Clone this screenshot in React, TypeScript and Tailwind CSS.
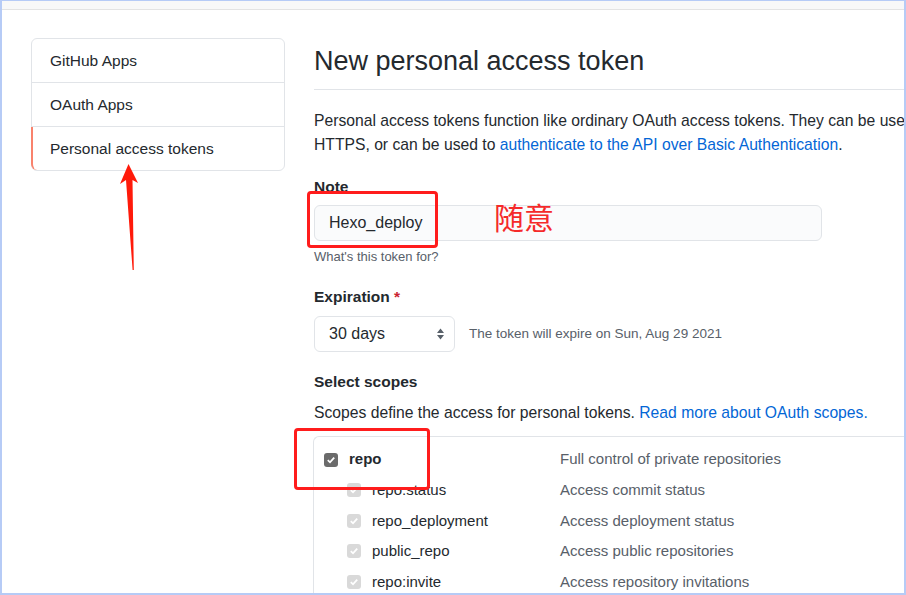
import React from "react";

const font = { fontFamily: '"Liberation Sans", Arial, "Noto Sans CJK SC", sans-serif' };

const subScopes = [
  { name: "repo:status", desc: "Access commit status" },
  { name: "repo_deployment", desc: "Access deployment status" },
  { name: "public_repo", desc: "Access public repositories" },
  { name: "repo:invite", desc: "Access repository invitations" },
];

const CheckBox = ({ disabled }: { disabled?: boolean }) => (
  <span
    className={`flex h-[14px] w-[14px] shrink-0 items-center justify-center rounded-[3px] ${
      disabled ? "bg-[#d9d9d9]" : "bg-[#6b6b6b]"
    }`}
  >
    <svg width="10" height="10" viewBox="0 0 10 10">
      <path d="M1.8 5.2 L4 7.3 L8.2 2.6" fill="none" stroke="white" strokeWidth="1.8" />
    </svg>
  </span>
);

const App = () => {
  return (
    <div
      className="relative h-[595px] w-[906px] overflow-hidden border-t border-b-2 border-l-2 border-r-2 border-[#b6cbf6] bg-white text-[#24292e]"
      style={font}
    >
      {/* top bar */}
      <div className="h-[8px] bg-[#f8f8f8]" />
      <div className="h-px bg-[#e3e3e3]" />

      <div className="flex items-start pt-[28px]">
        {/* Sidebar */}
        <nav className="ml-[29px] w-[254px] shrink-0 rounded-[6px] border border-[#e1e4e8] text-[15.5px]">
          <div className="flex h-[44px] items-center border-b border-[#e1e4e8] pl-[18px]">GitHub Apps</div>
          <div className="flex h-[44px] items-center border-b border-[#e1e4e8] pl-[18px]">OAuth Apps</div>
          <div className="-ml-px flex h-[43px] items-center rounded-bl-[6px] border-l-2 border-[#f9826c] pl-[17px]">
            Personal access tokens
          </div>
        </nav>

        {/* Main */}
        <main className="ml-[29px] w-[800px] shrink-0 pt-[5px]">
          <h1 className="border-b border-[#e1e4e8] pb-[10px] text-[27px] leading-[36px] font-normal">
            New personal access token
          </h1>

          <p className="mt-[19px] whitespace-nowrap text-[15.7px] leading-[24px]">
            Personal access tokens function like ordinary OAuth access tokens. They can be use
            <br />
            HTTPS, or can be used to{" "}
            <span className="text-[#0366d6]">authenticate to the API over Basic Authentication</span>.
          </p>

          <div className="mt-[18px] text-[15.5px] leading-[24px] font-bold">Note</div>
          <div className="mt-[6px] flex h-[36px] w-[508px] items-center rounded-[6px] border border-[#e1e4e8] bg-[#fafbfc] pl-[14px] text-[16px]">
            Hexo_deploy
          </div>
          <div className="mt-[6px] text-[13px] leading-[20px] text-[#586069]">What's this token for?</div>

          <div className="mt-[18px] text-[15.5px] leading-[24px] font-bold">
            Expiration <span className="text-[#cb2431]">*</span>
          </div>
          <div className="mt-[7px] flex items-center">
            <div className="flex h-[36px] w-[141px] items-center justify-between rounded-[6px] border border-[#e1e4e8] bg-white pl-[14px] pr-[9px] text-[16px]">
              <span>30 days</span>
              <svg width="9" height="14" viewBox="0 0 9 14">
                <path d="M4.5 1.5 L8 6 L1 6 Z M4.5 12.5 L8 8 L1 8 Z" fill="#586069" />
              </svg>
            </div>
            <span className="ml-[14px] text-[13.5px] text-[#586069]">The token will expire on Sun, Aug 29 2021</span>
          </div>

          <div className="mt-[18px] text-[15.5px] leading-[24px] font-bold">Select scopes</div>
          <p className="mt-[7px] text-[15.7px] leading-[24px]">
            Scopes define the access for personal tokens.{" "}
            <span className="text-[#0366d6]">Read more about OAuth scopes.</span>
          </p>

          <div className="-ml-px mt-[11px] rounded-tl-[6px] border-l border-t border-[#e1e4e8] pt-[7px] text-[15px]">
            <div className="flex h-[31px] items-center pl-[10px]">
              <div className="flex w-[236px] items-center gap-[11px]">
                <CheckBox />
                <span className="font-bold">repo</span>
              </div>
              <span className="text-[#586069]">Full control of private repositories</span>
            </div>
            {subScopes.map((s) => (
              <div key={s.name} className="flex h-[30.5px] items-center pl-[33px]">
                <div className="flex w-[213px] items-center gap-[11px]">
                  <CheckBox disabled />
                  <span>{s.name}</span>
                </div>
                <span className="text-[#586069]">{s.desc}</span>
              </div>
            ))}
          </div>
        </main>
      </div>

      {/* annotations */}
      <div className="absolute left-[305px] top-[190px] h-[57px] w-[131px] rounded-[4px] border-[3px] border-[#ff1c1c]" />
      <div
        className="absolute left-[492px] top-[195px] text-[30px] leading-[40px] text-[#f52a2a]"
        style={{ fontFamily: '"Noto Sans CJK SC", sans-serif' }}
      >
        随意
      </div>
      <div className="absolute left-[292px] top-[427px] h-[62px] w-[136px] rounded-[4px] border-[3px] border-[#ff1c1c]" />
      <svg className="absolute left-0 top-0" width="906" height="595" viewBox="0 0 906 595" pointerEvents="none">
        <polygon
          points="128.5,164 138,183 132.5,180 133.8,270 132.6,270 126,180 120,184"
          fill="#ff1a0a"
          transform="translate(-2,-1)"
        />
      </svg>
    </div>
  );
};

export default App;
